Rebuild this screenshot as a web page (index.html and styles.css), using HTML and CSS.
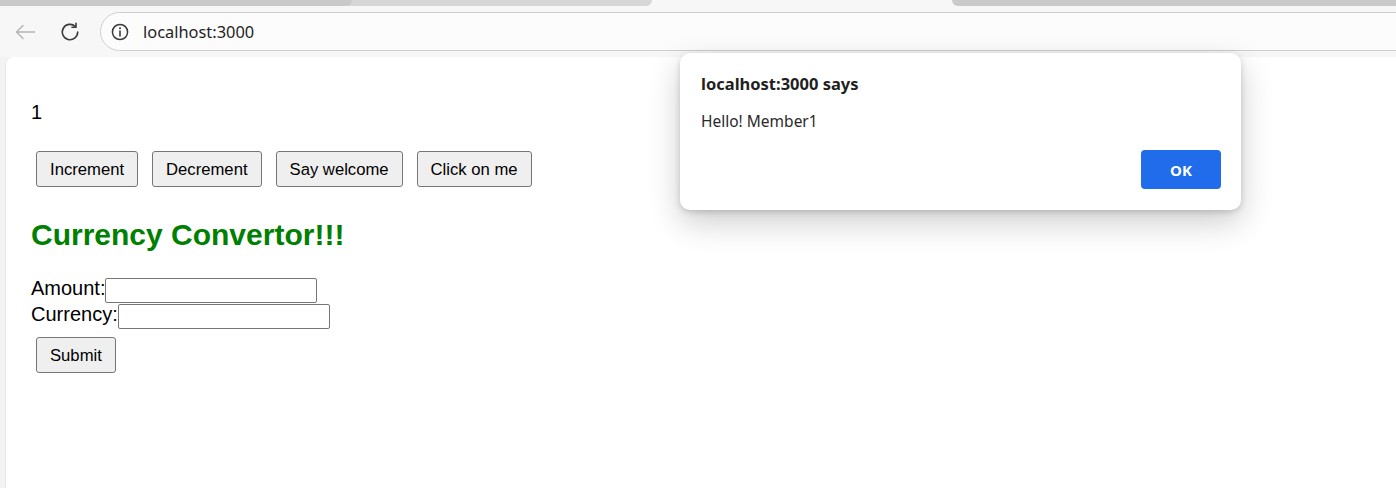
FILE: index.html
```html
<!DOCTYPE html>
<html lang="en">
<head>
<meta charset="utf-8">
<title>localhost:3000</title>
<link rel="stylesheet" href="styles.css">
</head>
<body>
<div class="browser">
  <div class="tabs">
    <div class="tab tab-one"></div>
    <div class="tab tab-two"></div>
    <div class="tab-active"></div>
    <div class="tab tab-three"></div>
  </div>
  <div class="toolbar">
    <span class="nav back">
      <svg viewBox="0 0 24 24" width="24" height="24"><path d="M21.5 12H3.5M10 5.5L3.5 12 10 18.5" fill="none" stroke="#b4b4b4" stroke-width="1.4" stroke-linecap="round" stroke-linejoin="round"/></svg>
    </span>
    <span class="nav reload">
      <svg viewBox="0 0 24 24" width="24" height="24"><path d="M19.7 12a7.7 7.7 0 1 1-2.3-5.45" fill="none" stroke="#3c3c3c" stroke-width="1.6" stroke-linecap="round"/><path d="M18 3.2v4h-4" fill="none" stroke="#3c3c3c" stroke-width="1.6" stroke-linecap="round" stroke-linejoin="round"/></svg>
    </span>
    <div class="omnibox">
      <span class="info">
        <svg viewBox="0 0 20 20" width="20" height="20"><circle cx="10" cy="10" r="7.6" fill="none" stroke="#3a3a3a" stroke-width="1.5"/><path d="M10 9v5" stroke="#3a3a3a" stroke-width="1.6" stroke-linecap="round"/><circle cx="10" cy="6.3" r="1" fill="#3a3a3a"/></svg>
      </span>
      <span class="url">localhost:3000</span>
    </div>
  </div>
  <div class="frame">
    <main class="page">
      <p class="count">1</p>
      <div class="actions">
        <button class="btn">Increment</button>
        <button class="btn">Decrement</button>
        <button class="btn">Say welcome</button>
        <button class="btn">Click on me</button>
      </div>
      <h2 class="title">Currency Convertor!!!</h2>
      <form class="converter">
        <div class="field"><label class="label">Amount:</label><input class="input" type="text"></div>
        <div class="field"><label class="label">Currency:</label><input class="input" type="text"></div>
        <button class="btn submit" type="button">Submit</button>
      </form>
    </main>
  </div>
  <div class="dialog">
    <div class="dlg-title">localhost:3000 says</div>
    <div class="dlg-msg">Hello! Member1</div>
    <div class="dlg-actions"><button class="ok">OK</button></div>
  </div>
</div>
</body>
</html>
```

FILE: styles.css
```css
* { box-sizing: border-box; }
html, body { margin: 0; padding: 0; }
body {
  width: 1396px;
  height: 488px;
  overflow: hidden;
  background: #f7f7f7;
}
.browser {
  position: relative;
  height: 488px;
  display: flex;
  flex-direction: column;
}
.tabs {
  display: flex;
  height: 6px;
  flex-shrink: 0;
}
.tab { height: 6px; }
.tab-one {
  width: 352px;
  background: #c9c9c9;
  border-bottom-right-radius: 6px;
  position: relative;
  z-index: 1;
}
.tab-two {
  width: 310px;
  margin-left: -10px;
  background: #d7d7d7;
  border-bottom-right-radius: 6px;
}
.tab-active { width: 300px; }
.tab-three {
  flex: 1;
  background: #cacaca;
  border-bottom-left-radius: 6px;
}
.toolbar {
  display: flex;
  align-items: center;
  height: 51px;
  padding: 6px 0;
  overflow: hidden;
  flex-shrink: 0;
}
.nav {
  width: 24px;
  height: 24px;
  display: flex;
  align-items: center;
  justify-content: center;
}
.nav svg { display: block; }
.back { margin-left: 13px; }
.reload { margin-left: 21px; }
.omnibox {
  flex: 1;
  margin-left: 18px;
  margin-right: -60px;
  height: 39px;
  border: 1px solid #cfcfcf;
  border-radius: 20px;
  background: #fcfcfc;
  display: flex;
  align-items: center;
  padding-left: 9px;
}
.info { width: 20px; height: 20px; display: block; }
.info svg { display: block; }
.url {
  margin-left: 13px;
  font-family: "Noto Sans", "Open Sans", sans-serif;
  font-size: 16.4px;
  color: #1f1f1f;
  line-height: 20px;
}
.frame {
  flex: 1;
  padding-left: 5px;
  background: #f3f3f3;
}
.page {
  height: 100%;
  background: #ffffff;
  border-top-left-radius: 8px;
  border-left: 1px solid #e8e8e8;
  padding: 44px 0 0 25px;
  font-family: "Liberation Sans", Arial, sans-serif;
  font-size: 20px;
  color: #000;
}
.count {
  margin: 0;
  line-height: 23px;
}
.actions {
  display: flex;
  gap: 14px;
  margin: 27px 0 0 5px;
}
.btn {
  height: 36px;
  padding: 1px 13px 0;
  font-family: "Liberation Sans", Arial, sans-serif;
  font-size: 16.67px;
  color: #000;
  background: #efefef;
  border: 1px solid #767676;
  border-radius: 3px;
}
.title {
  margin: 30px 0 26px;
  font-size: 30px;
  line-height: 35px;
  font-weight: bold;
  color: #008000;
}
.converter { margin: 0; }
.field {
  display: flex;
  height: 26px;
}
.label { line-height: 20px; }
.input {
  width: 212px;
  height: 25px;
  margin: 0;
  border: 1px solid #767676;
  border-radius: 2px;
  background: #fff;
  font-size: 16.67px;
}
.submit {
  display: block;
  margin: 7px 0 0 5px;
}
.dialog {
  position: absolute;
  left: 680px;
  top: 53px;
  width: 561px;
  height: 157px;
  background: #fff;
  border-radius: 10px;
  padding: 21px 20px 21px 21px;
  box-shadow: 0 12px 32px rgba(0, 0, 0, 0.2), 0 2px 6px rgba(0, 0, 0, 0.16);
  font-family: "Noto Sans", "Open Sans", sans-serif;
  color: #1f1f1f;
  z-index: 5;
}
.dlg-title {
  font-size: 16.5px;
  font-weight: bold;
  line-height: 20px;
}
.dlg-msg {
  margin-top: 17px;
  font-size: 15.5px;
  line-height: 20px;
  color: #2a2a2a;
}
.dlg-actions {
  display: flex;
  justify-content: flex-end;
  margin-top: 19px;
}
.ok {
  width: 80px;
  height: 39px;
  border: none;
  border-radius: 4px;
  background: #206ceb;
  color: #fff;
  font-family: "Noto Sans", "Open Sans", sans-serif;
  font-size: 15px;
  font-weight: bold;
}
```
